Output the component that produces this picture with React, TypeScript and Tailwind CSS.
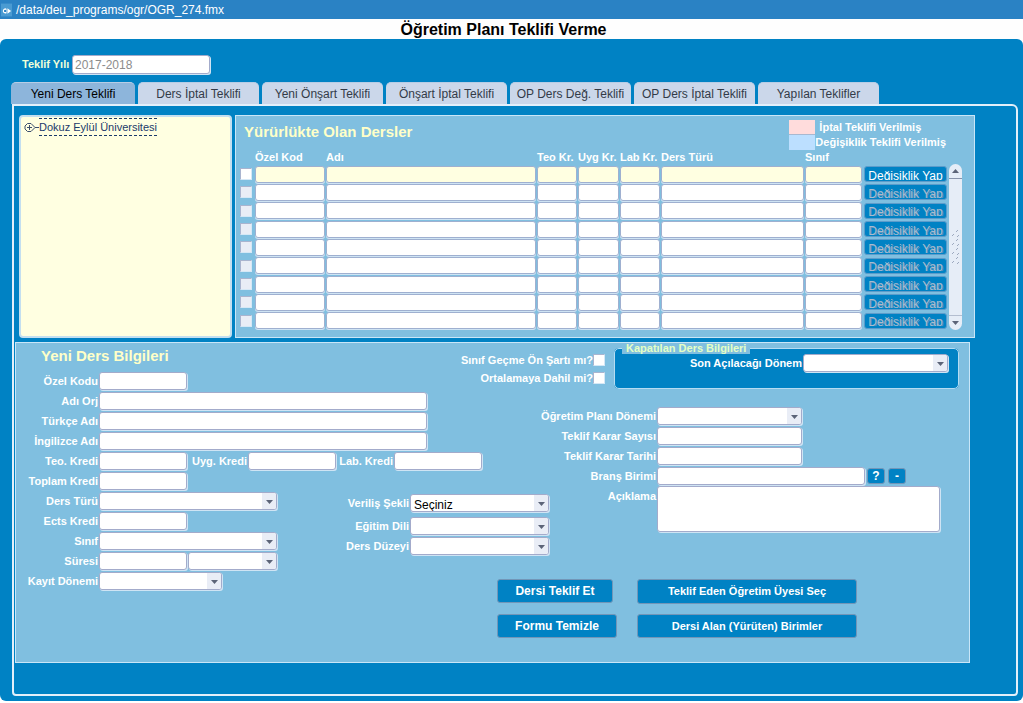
import React, { useState } from 'react';
import clsx from 'clsx';

const tabs = [
  'Yeni Ders Teklifi',
  'Ders İptal Teklifi',
  'Yeni Önşart Teklifi',
  'Önşart İptal Teklifi',
  'OP Ders Değ. Teklifi',
  'OP Ders İptal Teklifi',
  'Yapılan Teklifler',
];

const columns = [
  { label: 'Özel Kod', width: 'w-[71px]' },
  { label: 'Adı', width: '' },
  { label: 'Teo Kr.', width: 'w-[41px]' },
  { label: 'Uyg Kr.', width: 'w-[42px]' },
  { label: 'Lab Kr.', width: 'w-[41px]' },
  { label: 'Ders Türü', width: 'w-[144px]' },
  { label: 'Sınıf', width: 'w-[58px]' },
];

const rows = Array.from({ length: 9 }, (_, i) => i);

const boxClass =
  'rounded-[3px] border border-[#a3abcb] bg-white shadow-[1px_1px_0_#cfe4f4] outline-none';

interface FieldProps {
  id: string;
  label: string;
  labelWidth?: string;
  children: React.ReactNode;
}

function Field({ id, label, labelWidth = 'w-[82px]', children }: FieldProps) {
  return (
    <div className="flex h-5 items-center">
      <label htmlFor={id} className={clsx('mr-px flex shrink-0 justify-end whitespace-nowrap', labelWidth)}>
        {label}
      </label>
      {children}
    </div>
  );
}

function TextBox({ id, width = 'w-[88px]' }: { id: string; width?: string }) {
  return <input id={id} type="text" className={clsx('h-[18px] px-1 text-xs font-normal text-black', boxClass, width)} />;
}

interface DropDownProps {
  id: string;
  width: string;
  value?: string;
  label?: string;
}

function DropDown({ id, width, value = '', label }: DropDownProps) {
  return (
    <div className={clsx('relative h-[18px] overflow-hidden', boxClass, width)}>
      <select
        id={id}
        aria-label={label}
        defaultValue={value}
        className="block h-5 w-full appearance-none pl-[3px] text-xs font-normal text-black outline-none"
      >
        <option value={value}>{value}</option>
      </select>
      <span className="pointer-events-none absolute inset-y-0 right-0 flex w-[14px] items-center justify-center bg-[#e9edf6]">
        <svg viewBox="0 0 7 4" className="mt-px h-1 w-[7px]" fill="#5c6478">
          <path d="M0 0h7L3.5 4z" />
        </svg>
      </span>
    </div>
  );
}

function CheckBox({ id, label, muted }: { id: string; label?: string; muted?: boolean }) {
  return (
    <input
      id={id}
      type="checkbox"
      aria-label={label}
      className={clsx(
        'block size-3 shrink-0 appearance-none border border-t-[#a9b4cf] border-l-[#a9b4cf] border-r-[#d5e8f6] border-b-[#d5e8f6] checked:bg-[#0082c4]',
        muted ? 'bg-[#e9edf6]' : 'bg-white'
      )}
    />
  );
}

function ActionButton({ children, className }: { children: React.ReactNode; className: string }) {
  return (
    <button
      type="button"
      className={clsx('rounded-[3px] border border-[#7296b8] bg-[#0082c4] font-bold whitespace-nowrap text-white', className)}
    >
      {children}
    </button>
  );
}

function ScrollBar() {
  return (
    <div className="flex w-[13px] shrink-0 flex-col rounded-full bg-[#e6edf7]">
      <button type="button" aria-label="Yukarı" className="flex h-[15px] items-center justify-center border-b border-[#8893aa]">
        <svg viewBox="0 0 7 4" className="h-1 w-[7px]" fill="#5c6478">
          <path d="M0 4h7L3.5 0z" />
        </svg>
      </button>
      <div className="flex flex-1 items-center justify-center">
        <svg viewBox="0 0 9 36" className="h-9 w-[9px]" stroke="#9da9bf" strokeWidth="1">
          {[0, 9, 18, 27].map((y) => (
            <path key={y} d={`M5 ${y + 3}l2-2M1 ${y + 7}l2-2M6 ${y + 8}l2-2`} />
          ))}
        </svg>
      </div>
      <button type="button" aria-label="Aşağı" className="flex h-[15px] items-center justify-center border-t border-[#b4bed0]">
        <svg viewBox="0 0 7 4" className="h-1 w-[7px]" fill="#5c6478">
          <path d="M0 0h7L3.5 4z" />
        </svg>
      </button>
    </div>
  );
}

function CourseTable() {
  return (
    <table className="h-[181px] flex-1 table-fixed border-collapse">
      <thead>
        <tr className="h-4 text-left text-[11px] leading-4 whitespace-nowrap">
          <th className="w-[15px] p-0" />
          {columns.map((col) => (
            <th key={col.label} className={clsx('p-0', col.width)}>
              {col.label}
            </th>
          ))}
          <th className="w-[84px] p-0" />
        </tr>
      </thead>
      <tbody>
        {rows.map((row) => (
          <tr key={row}>
            <td className="p-0">
              <CheckBox id={`sec-${row}`} label={`Satır ${row + 1}`} muted={row > 0} />
            </td>
            {columns.map((col) => (
              <td key={col.label} className="p-0 pr-px">
                <input
                  type="text"
                  aria-label={`${col.label} ${row + 1}`}
                  className={clsx(
                    'block h-[17px] w-full rounded-[3px] border border-[#9fb0d0] px-1 text-xs text-black shadow-[0_1px_0_#cfe4f4] outline-none',
                    row === 0 ? 'bg-[#ffffe1]' : 'bg-white'
                  )}
                />
              </td>
            ))}
            <td className="p-0 pl-px">
              <button
                type="button"
                disabled={row > 0}
                className="block h-4 w-[83px] rounded-[3px] border border-[#5c9ccb] bg-[#0082c4] text-xs"
              >
                <span
                  className={clsx(
                    'block h-[11px] overflow-hidden leading-[14px] whitespace-nowrap',
                    row === 0 ? 'text-white' : 'text-[#a9bccf] [text-shadow:1px_1px_0_#5b93bd]'
                  )}
                >
                  Değişiklik Yap
                </span>
              </button>
            </td>
          </tr>
        ))}
      </tbody>
    </table>
  );
}

function CoursesPanel() {
  return (
    <section className="min-w-0 flex-1 border border-[#c9e6f8] bg-[#80bfe0] pr-[12px] pb-[7px] pl-1 text-white">
      <div className="flex h-[33px] items-start justify-between">
        <h2 className="pt-1 pl-1 text-[15px] leading-6 font-bold text-[#ffffc8]">Yürürlükte Olan Dersler</h2>
        <div className="pt-1 pr-4 text-[11px] leading-[15px] font-bold">
          <div className="flex">
            <span className="mr-1 w-[26px] border-b border-[#a8b8d0] bg-[#ffdcdc]" />
            İptal Teklifi Verilmiş
          </div>
          <div className="flex">
            <span className="w-[26px] bg-[#bcdfff]" />
            Değişiklik Teklifi Verilmiş
          </div>
        </div>
      </div>
      <div className="flex gap-[2px]">
        <CourseTable />
        <div className="flex pt-[15px]">
          <ScrollBar />
        </div>
      </div>
    </section>
  );
}

function CourseForm() {
  return (
    <section className="mt-1 mr-[46px] ml-px border border-[#c9e6f8] bg-[#80bfe0] text-[11px] font-bold text-white">
      <div className="flex h-12 items-start">
        <div className="w-[420px] shrink-0">
          <h2 className="h-7 pt-px pl-[25px] text-[15px] leading-6 text-[#ffffc8]">Yeni Ders Bilgileri</h2>
          <Field id="ozelKodu" label="Özel Kodu">
            <TextBox id="ozelKodu" />
          </Field>
        </div>
        <div className="w-[169px] shrink-0 pt-2">
          <div className="flex h-[18px] items-center justify-end">
            <label htmlFor="onSart">Sınıf Geçme Ön Şartı mı?</label>
            <CheckBox id="onSart" />
          </div>
          <div className="flex h-[18px] items-center justify-end">
            <label htmlFor="ortalama">Ortalamaya Dahil mi?</label>
            <CheckBox id="ortalama" />
          </div>
        </div>
        <fieldset className="mr-[10px] ml-[9px] h-[46px] flex-1 rounded-[5px] border border-[#b5dcf2] bg-[#0082c4] px-[7px]">
          <legend className="bg-[#80bfe0] px-1 leading-[11px] text-[#e4ffc4]">Kapatılan Ders Bilgileri</legend>
          <div className="flex items-center justify-end pr-[3px]">
            <label htmlFor="sonDonem" className="mr-px">
              Son Açılacağı Dönem
            </label>
            <DropDown id="sonDonem" width="w-[145px]" />
          </div>
        </fieldset>
      </div>

      <div className="flex">
        <div className="w-[533px] shrink-0">
          <Field id="adiOrj" label="Adı Orj">
            <TextBox id="adiOrj" width="w-[328px]" />
          </Field>
          <Field id="turkceAdi" label="Türkçe Adı">
            <TextBox id="turkceAdi" width="w-[328px]" />
          </Field>
          <Field id="ingilizceAdi" label="İngilizce Adı">
            <TextBox id="ingilizceAdi" width="w-[328px]" />
          </Field>
          <div className="flex">
            <Field id="teoKredi" label="Teo. Kredi">
              <TextBox id="teoKredi" />
            </Field>
            <Field id="uygKredi" label="Uyg. Kredi" labelWidth="w-[60px]">
              <TextBox id="uygKredi" />
            </Field>
            <Field id="labKredi" label="Lab. Kredi" labelWidth="w-[57px]">
              <TextBox id="labKredi" />
            </Field>
          </div>
          <Field id="toplamKredi" label="Toplam Kredi">
            <TextBox id="toplamKredi" />
          </Field>
          <div className="flex justify-between">
            <div>
              <Field id="dersTuru" label="Ders Türü">
                <DropDown id="dersTuru" width="w-[178px]" />
              </Field>
              <Field id="ectsKredi" label="Ects Kredi">
                <TextBox id="ectsKredi" />
              </Field>
              <Field id="sinif" label="Sınıf">
                <DropDown id="sinif" width="w-[178px]" />
              </Field>
              <Field id="suresi" label="Süresi">
                <TextBox id="suresi" />
                <span className="w-px" />
                <DropDown id="sureBirimi" width="w-[89px]" label="Süre birimi" />
              </Field>
            </div>
            <div className="pt-[2px]">
              <Field id="verilisSekli" label="Veriliş Şekli" labelWidth="w-[70px]">
                <DropDown id="verilisSekli" width="w-[139px]" value="Seçiniz" />
              </Field>
              <div className="h-[3px]" />
              <Field id="egitimDili" label="Eğitim Dili" labelWidth="w-[70px]">
                <DropDown id="egitimDili" width="w-[139px]" />
              </Field>
              <Field id="dersDuzeyi" label="Ders Düzeyi" labelWidth="w-[70px]">
                <DropDown id="dersDuzeyi" width="w-[139px]" />
              </Field>
            </div>
          </div>
        </div>

        <div className="flex-1 pt-[15px]">
          <Field id="planDonemi" label="Öğretim Planı Dönemi" labelWidth="w-[107px]">
            <DropDown id="planDonemi" width="w-[145px]" />
          </Field>
          <Field id="kararSayisi" label="Teklif Karar Sayısı" labelWidth="w-[107px]">
            <TextBox id="kararSayisi" width="w-[145px]" />
          </Field>
          <Field id="kararTarihi" label="Teklif Karar Tarihi" labelWidth="w-[107px]">
            <TextBox id="kararTarihi" width="w-[145px]" />
          </Field>
          <Field id="bransBirimi" label="Branş Birimi" labelWidth="w-[107px]">
            <TextBox id="bransBirimi" width="w-[208px]" />
            <ActionButton className="ml-[2px] h-4 w-[18px] text-xs leading-3">?</ActionButton>
            <ActionButton className="ml-[3px] h-4 w-[18px] text-xs leading-3">-</ActionButton>
          </Field>
          <div className="flex items-start">
            <label htmlFor="aciklama" className="mr-px w-[107px] shrink-0 pt-[2px] text-right">
              Açıklama
            </label>
            <textarea id="aciklama" className={clsx('h-[46px] w-[283px] resize-none p-1 font-normal text-black', boxClass)} />
          </div>
        </div>
      </div>

      <div className="flex items-start pb-6">
        <div className="w-[481px] shrink-0">
          <Field id="kayitDonemi" label="Kayıt Dönemi">
            <DropDown id="kayitDonemi" width="w-[123px]" />
          </Field>
        </div>
        <div className="grid grid-cols-[140px_220px] gap-y-[10px] pt-2">
          <ActionButton className="h-6 w-[116px] text-xs">Dersi Teklif Et</ActionButton>
          <ActionButton className="h-[25px] w-[220px] text-[11px]">Teklif Eden Öğretim Üyesi Seç</ActionButton>
          <ActionButton className="h-6 w-[120px] text-xs">Formu Temizle</ActionButton>
          <ActionButton className="h-6 w-[220px] text-[11px]">Dersi Alan (Yürüten) Birimler</ActionButton>
        </div>
      </div>
    </section>
  );
}

export default function App() {
  const [activeTab, setActiveTab] = useState(tabs[0]);

  return (
    <div className="bg-[#fefefe] font-['Liberation_Sans',Arial,sans-serif]">
      {/* Window title */}
      <div className="flex h-[19px] items-center bg-[#2a82c4] text-xs text-white">
        <svg viewBox="0 0 12 14" className="mr-1 ml-px h-[14px] w-[11px]">
          <rect width="12" height="14" fill="#4a9bd2" />
          <path d="M6 5.5A2.8 2.8 0 1 0 6 10.500M7 5l4 3-4 3z" fill="#fff" />
          <circle cx="4.500" cy="8" r="1.300" fill="#2a82c4" />
        </svg>
        <span>/data/deu_programs/ogr/OGR_274.fmx</span>
      </div>
      <h1 className="h-5 pr-4 text-center text-base leading-[22px] font-bold text-black">Öğretim Planı Teklifi Verme</h1>

      <main className="rounded-md bg-[#0082c4] pt-4 pr-[5px] pb-[5px] pl-3">
        <div className="flex h-[19px] items-center pl-[10px]">
          <label htmlFor="teklifYili" className="w-[50px] text-[11px] font-bold whitespace-nowrap text-[#efffd8]">
            Teklif Yılı
          </label>
          <input
            id="teklifYili"
            type="text"
            readOnly
            value="2017-2018"
            className={clsx('h-[19px] w-[138px] px-[2px] text-xs text-[#8c8c8c]', boxClass)}
          />
        </div>

        {/* Tabs */}
        <div role="tablist" className="mt-2 -ml-px flex h-[22px] gap-[3px]">
          {tabs.map((tab) => (
            <button
              key={tab}
              role="tab"
              type="button"
              aria-selected={activeTab === tab}
              onClick={() => setActiveTab(tab)}
              className={clsx(
                'rounded-t-[5px] border-t border-[#b7cde6] text-xs whitespace-nowrap',
                activeTab === tab ? 'w-[124px] bg-[#8db5db] text-black' : 'w-[121px] bg-[#cbd7ea] text-[#333b48]'
              )}
            >
              {tab}
            </button>
          ))}
        </div>

        <div className="rounded-tr-md rounded-b-sm border-2 border-[#e3effa] pb-[31px]">
          <div className="flex gap-[3px] pt-[9px] pr-[41px] pl-[5px]">
            <div className="w-[213px] shrink-0 rounded-[4px] border-2 border-[#c3dff0] bg-[#ffffe1] pt-px pl-[3px]">
              <button type="button" className="flex items-center text-[#1b3a6b]">
                <svg viewBox="0 0 15 11" className="h-[11px] w-[15px]" fill="none" stroke="#3a4c6c">
                  <path d="M3.500 1.500h3.500l4 4-4 4H3.500l-2.500-2.500v-3zM3 5.500h5M5.500 3v5M11 5.500h4" />
                </svg>
                <span className="border-y border-dashed border-[#1b3a6b] text-[11px] leading-4">Dokuz Eylül Üniversitesi</span>
              </button>
            </div>
            <CoursesPanel />
          </div>
          <CourseForm />
        </div>
      </main>
    </div>
  );
}
